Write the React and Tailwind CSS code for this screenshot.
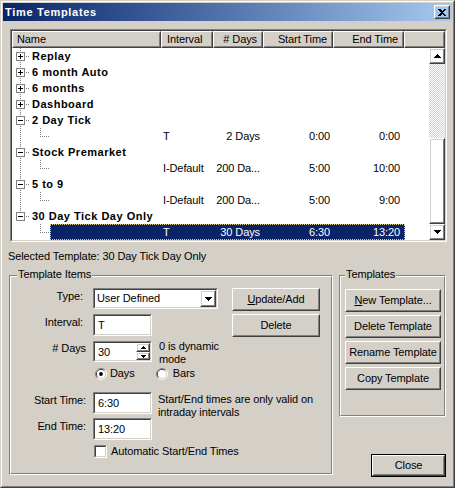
import React from 'react';

const FONT = "font-['Liberation_Sans',Arial,sans-serif]";

function Raised({ className = '', inner = '', children }) {
  return (
    <div className={'border border-t-white border-l-white border-r-[#404040] border-b-[#404040] ' + className}>
      <div className={'h-full w-full border border-t-[#d4d0c8] border-l-[#d4d0c8] border-r-[#808080] border-b-[#808080] ' + inner}>
        {children}
      </div>
    </div>
  );
}

function Sunken({ className = '', inner = '', children }) {
  return (
    <div className={'border border-t-[#808080] border-l-[#808080] border-r-white border-b-white ' + className}>
      <div className={'h-full w-full border border-t-[#404040] border-l-[#404040] border-r-[#d4d0c8] border-b-[#d4d0c8] bg-white ' + inner}>
        {children}
      </div>
    </div>
  );
}

function Button({ className = '', children, isDefault = false }) {
  const btn = (
    <Raised className={isDefault ? 'h-full w-full' : className} inner="flex items-center justify-center">
      <span className="leading-[13px]">{children}</span>
    </Raised>
  );
  if (isDefault) {
    return <div className={'border border-black ' + className}>{btn}</div>;
  }
  return btn;
}

function UpArrow() {
  return (
    <svg width="7" height="4" viewBox="0 0 7 4" shapeRendering="crispEdges">
      <rect x="3" y="0" width="1" height="1" fill="black" />
      <rect x="2" y="1" width="3" height="1" fill="black" />
      <rect x="1" y="2" width="5" height="1" fill="black" />
      <rect x="0" y="3" width="7" height="1" fill="black" />
    </svg>
  );
}

function DownArrow() {
  return (
    <svg width="7" height="4" viewBox="0 0 7 4" shapeRendering="crispEdges">
      <rect x="0" y="0" width="7" height="1" fill="black" />
      <rect x="1" y="1" width="5" height="1" fill="black" />
      <rect x="2" y="2" width="3" height="1" fill="black" />
      <rect x="3" y="3" width="1" height="1" fill="black" />
    </svg>
  );
}

function TinyUp() {
  return (
    <svg width="5" height="3" viewBox="0 0 5 3" shapeRendering="crispEdges">
      <rect x="2" y="0" width="1" height="1" fill="black" />
      <rect x="1" y="1" width="3" height="1" fill="black" />
      <rect x="0" y="2" width="5" height="1" fill="black" />
    </svg>
  );
}

function TinyDown() {
  return (
    <svg width="5" height="3" viewBox="0 0 5 3" shapeRendering="crispEdges">
      <rect x="0" y="0" width="5" height="1" fill="black" />
      <rect x="1" y="1" width="3" height="1" fill="black" />
      <rect x="2" y="2" width="1" height="1" fill="black" />
    </svg>
  );
}

function Dots({ x, y0, y1, horizontal = false, y }) {
  const out = [];
  if (horizontal) {
    for (let i = y0; i <= y1; i += 2) out.push(<rect key={i} x={i} y={y} width="1" height="1" fill="#808080" />);
  } else {
    for (let i = y0; i <= y1; i += 2) out.push(<rect key={i} x={x} y={i} width="1" height="1" fill="#808080" />);
  }
  return <>{out}</>;
}

function ParentLines({ expanded, last }) {
  return (
    <svg width="20" height="16" viewBox="0 0 20 16" shapeRendering="crispEdges" className="shrink-0">
      <Dots x={8} y0={0} y1={last ? 4 : 15} />
      <Dots horizontal y={8} y0={14} y1={17} />
      <rect x="4.5" y="4.5" width="8" height="8" fill="white" stroke="#808080" strokeWidth="1" />
      <rect x="6" y="8" width="5" height="1" fill="black" />
      {!expanded && <rect x="8" y="6" width="1" height="5" fill="black" />}
    </svg>
  );
}

function ChildLines({ last }) {
  return (
    <svg width="38" height="16" viewBox="0 0 38 16" shapeRendering="crispEdges" className="shrink-0">
      {!last && <Dots x={8} y0={0} y1={15} />}
      <Dots x={28} y0={0} y1={7} />
      <Dots horizontal y={8} y0={28} y1={36} />
    </svg>
  );
}

const rows = [
  { p: 'Replay' },
  { p: '6 month Auto' },
  { p: '6 months' },
  { p: 'Dashboard' },
  { p: '2 Day Tick', expanded: true },
  { c: ['T', '2 Days', '0:00', '0:00'] },
  { p: 'Stock Premarket', expanded: true },
  { c: ['I-Default', '200 Da...', '5:00', '10:00'] },
  { p: '5 to 9', expanded: true },
  { c: ['I-Default', '200 Da...', '5:00', '9:00'] },
  { p: '30 Day Tick Day Only', expanded: true, last: true },
  { c: ['T', '30 Days', '6:30', '13:20'], last: true, selected: true },
];

function TreeRow({ r }) {
  if (r.p) {
    return (
      <div className="flex h-[16px] items-center">
        <ParentLines expanded={r.expanded} last={r.last} />
        <span className="font-bold leading-[16px] whitespace-nowrap tracking-[0.5px]">{r.p}</span>
      </div>
    );
  }
  const sel = r.selected;
  return (
    <div className="flex h-[16px]">
      <ChildLines last={r.last} />
      <div
        className={
          'flex h-[16px] w-[355px] leading-[14px] ' +
          (sel ? 'bg-[#0a246a] text-white border border-dotted border-[#d8cf9a]' : 'border border-transparent')
        }
      >
        <div className="w-[110px]" />
        <div className="w-[52px] pl-[2px]">{r.c[0]}</div>
        <div className="w-[50px] pr-[3px] text-right">{r.c[1]}</div>
        <div className="w-[70px] pr-[3px] text-right">{r.c[2]}</div>
        <div className="w-[71px] pr-[4px] text-right">{r.c[3]}</div>
      </div>
    </div>
  );
}

function HeaderCell({ w, children, right = false, pl = '' }) {
  return (
    <Raised className={w + ' h-[17px]'} inner={'flex items-center ' + (right ? 'justify-end pr-[4px]' : pl)}>
      <span className="leading-[13px] whitespace-nowrap">{children}</span>
    </Raised>
  );
}

function Group({ title, className = '', titleClass = '', children }) {
  return (
    <div className={'relative border border-t-[#808080] border-l-[#808080] border-r-white border-b-white ' + className}>
      <div className="h-full w-full border border-t-white border-l-white border-r-[#808080] border-b-[#808080]">
        {children}
      </div>
      <span className={'absolute top-[-8px] bg-[#d4d0c8] px-[1px] leading-[13px] ' + titleClass}>{title}</span>
    </div>
  );
}

function Radio({ checked }) {
  return (
    <svg width="12" height="12" viewBox="0 0 12 12" className="shrink-0">
      <path d="M2.11 9.89 A5.5 5.5 0 0 1 9.89 2.11" fill="none" stroke="#808080" strokeWidth="1" />
      <path d="M9.89 2.11 A5.5 5.5 0 0 1 2.11 9.89" fill="none" stroke="#ffffff" strokeWidth="1" />
      <path d="M2.82 9.18 A4.5 4.5 0 0 1 9.18 2.82" fill="none" stroke="#404040" strokeWidth="1" />
      <path d="M9.18 2.82 A4.5 4.5 0 0 1 2.82 9.18" fill="none" stroke="#d4d0c8" strokeWidth="1" />
      <circle cx="6" cy="6" r="4" fill="white" />
      {checked && <circle cx="6" cy="6" r="1.9" fill="black" />}
    </svg>
  );
}

export default function App() {
  return (
    <div className={'w-[455px] h-[488px] bg-[#d4d0c8] text-[11px] leading-[13px] tracking-[-0.1px] text-black ' + FONT}>
      <div className="h-full w-full border border-t-[#d4d0c8] border-l-[#d4d0c8] border-r-[#404040] border-b-[#404040]">
        <div className="h-full w-full border border-t-white border-l-white border-r-[#808080] border-b-[#808080]">
          <div className="h-full w-full border border-[#d4d0c8] flex flex-col">
            {/* Title bar */}
            <div className="h-[18px] shrink-0 bg-linear-to-r from-[#0a246a] to-[#a6caf0] flex items-center pl-[2px] pr-[2px]">
              <span className="flex-1 font-bold text-white leading-[13px] tracking-[0.7px]">Time Templates</span>
              <Raised className="w-[16px] h-[14px]" inner="flex items-center justify-center">
                <svg width="8" height="7" viewBox="0 0 8 7" shapeRendering="crispEdges">
                  <path d="M0 0h2l2 2 2-2h2L5 3.5 8 7H6L4 5 2 7H0l3-3.5z" fill="black" />
                </svg>
              </Raised>
            </div>

            {/* Tree list */}
            <Sunken className="ml-[7px] mt-[8px] w-[437px] h-[213px] shrink-0" inner="flex flex-col">
              <div className="flex h-[17px] bg-[#d4d0c8]">
                <HeaderCell w="w-[149px]" pl="pl-[3px]">Name</HeaderCell>
                <HeaderCell w="w-[52px]" pl="pl-[4px]">Interval</HeaderCell>
                <HeaderCell w="w-[50px]" right>
                  # Days
                </HeaderCell>
                <HeaderCell w="w-[70px]" right>
                  Start Time
                </HeaderCell>
                <HeaderCell w="w-[71px]" right>
                  End Time
                </HeaderCell>
                <HeaderCell w="w-[41px]"> </HeaderCell>
              </div>
              <div className="flex h-[192px]">
                <div className="w-[417px] flex flex-col">
                  {rows.map((r, i) => (
                    <TreeRow key={i} r={r} />
                  ))}
                </div>
                <div className="w-[16px] flex flex-col">
                  <Raised className="w-[16px] h-[16px]" inner="flex items-center justify-center">
                    <UpArrow />
                  </Raised>
                  <div className="h-[74px] bg-[image:repeating-conic-gradient(#ffffff_0_25%,#d4d0c8_0_50%)] bg-[length:2px_2px]" />
                  <Raised className="w-[16px] h-[86px]" />
                  <Raised className="w-[16px] h-[16px]" inner="flex items-center justify-center">
                    <DownArrow />
                  </Raised>
                </div>
              </div>
            </Sunken>

            <div className="ml-[5px] mt-[8px] h-[13px]">Selected Template: 30 Day Tick Day Only</div>

            <div className="flex ml-[6px] mt-[12px]">
              <Group title="Template Items" className="w-[324px] h-[200px]" titleClass="left-[7px]">
                <div className="flex flex-col pt-[11px]">
                  <div className="flex h-[26px] items-start">
                    <div className="w-[82px] pr-[10px] pt-[2px] text-right">Type:</div>
                    <Sunken className="w-[125px] h-[21px]" inner="flex items-center">
                      <span className="flex-1 pl-[2px] leading-[13px]">User Defined</span>
                      <Raised className="w-[16px] h-[17px]" inner="flex items-center justify-center">
                        <DownArrow />
                      </Raised>
                    </Sunken>
                    <Button className="ml-[14px] w-[88px] h-[23px]">
                      <span className="underline">U</span>pdate/Add
                    </Button>
                  </div>
                  <div className="flex h-[27px] items-start">
                    <div className="w-[82px] pr-[10px] pt-[2px] text-right">Interval:</div>
                    <Sunken className="w-[59px] h-[22px]" inner="flex items-center pl-[3px]">
                      T
                    </Sunken>
                    <Button className="ml-[80px] w-[88px] h-[23px]">Delete</Button>
                  </div>
                  <div className="flex h-[26px] items-start">
                    <div className="w-[82px] pr-[7px] pt-[1px] text-right"># Days</div>
                    <Sunken className="w-[59px] h-[21px]" inner="flex">
                      <span className="flex-1 pl-[3px] pt-[3px] leading-[13px]">30</span>
                      <div className="flex flex-col w-[14px]">
                        <Raised className="h-[9px] w-[14px]" inner="flex items-center justify-center">
                          <TinyUp />
                        </Raised>
                        <Raised className="h-[8px] w-[14px]" inner="flex items-center justify-center">
                          <TinyDown />
                        </Raised>
                      </div>
                    </Sunken>
                    <div className="ml-[7px] -mt-[1px]">
                      0 is dynamic
                      <br />
                      mode
                    </div>
                  </div>
                  <div className="flex h-[25px] items-start pl-[84px]">
                    <div className="flex items-center">
                      <Radio checked />
                      <span className="ml-[3px]">Days</span>
                    </div>
                    <div className="flex items-center ml-[21px]">
                      <Radio />
                      <span className="ml-[5px]">Bars</span>
                    </div>
                  </div>
                  <div className="flex h-[26px] items-start">
                    <div className="w-[82px] pr-[7px] pt-[2px] text-right">Start Time:</div>
                    <Sunken className="w-[59px] h-[22px]" inner="flex items-center pl-[3px]">
                      6:30
                    </Sunken>
                    <div className="ml-[6px] pt-[1px]">
                      Start/End times are only valid on
                      <br />
                      intraday intervals
                    </div>
                  </div>
                  <div className="flex h-[27px] items-start">
                    <div className="w-[82px] pr-[7px] pt-[2px] text-right">End Time:</div>
                    <Sunken className="w-[59px] h-[22px]" inner="flex items-center pl-[3px]">
                      13:20
                    </Sunken>
                  </div>
                  <div className="flex items-center pl-[83px]">
                    <Sunken className="w-[13px] h-[13px]" />
                    <span className="ml-[4px]">Automatic Start/End Times</span>
                  </div>
                </div>
              </Group>

              <div className="ml-[6px] flex flex-col">
                <Group title="Templates" className="w-[107px] h-[142px]" titleClass="left-[5px]">
                  <div className="flex flex-col gap-[3px] pt-[12px] pl-[4px]">
                    <Button className="w-[96px] h-[23px]">
                      <span className="underline">N</span>ew Template...
                    </Button>
                    <Button className="w-[96px] h-[23px]">Delete Template</Button>
                    <Button className="w-[96px] h-[23px]">Rename Template</Button>
                    <Button className="w-[96px] h-[23px]">Copy Template</Button>
                  </div>
                </Group>
                <Button isDefault className="mt-[37px] ml-[32px] w-[75px] h-[23px]">
                  Close
                </Button>
              </div>
            </div>
          </div>
        </div>
      </div>
    </div>
  );
}
